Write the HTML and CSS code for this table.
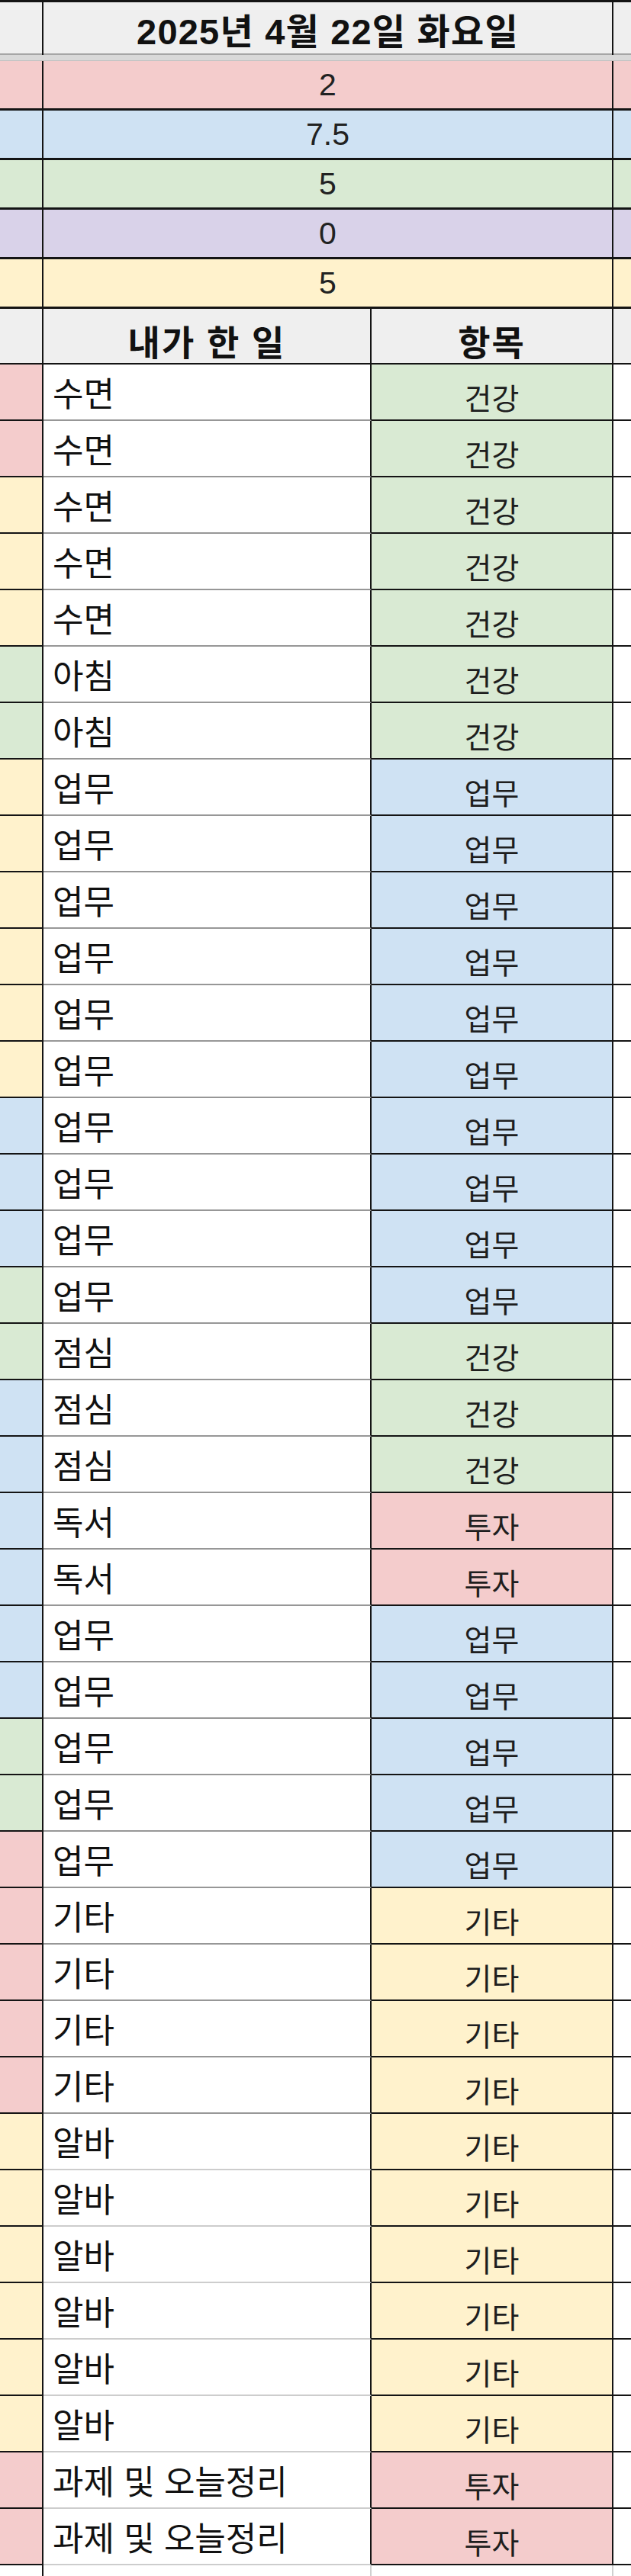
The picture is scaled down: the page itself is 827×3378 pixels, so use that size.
FILE: index.html
```html
<!DOCTYPE html>
<html lang="ko">
<head>
<meta charset="utf-8">
<title>2025년 4월 22일 화요일</title>
<link rel="stylesheet" href="styles.css">
</head>
<body>
<div class="sheet">
  <div class="row wide title-row">
    <div class="cell"></div>
    <div class="cell title">2025년 4월 22일 화요일</div>
    <div class="cell"></div>
  </div>
  <div class="divider"></div>
  <div class="row wide sum pink"><div class="cell"></div><div class="cell num">2</div><div class="cell"></div></div>
  <div class="row wide sum blue"><div class="cell"></div><div class="cell num">7.5</div><div class="cell"></div></div>
  <div class="row wide sum green"><div class="cell"></div><div class="cell num">5</div><div class="cell"></div></div>
  <div class="row wide sum purple"><div class="cell"></div><div class="cell num">0</div><div class="cell"></div></div>
  <div class="row wide sum yellow"><div class="cell"></div><div class="cell num">5</div><div class="cell"></div></div>
  <div class="row head">
    <div class="cell"></div>
    <div class="cell hcell">내가 한 일</div>
    <div class="cell hcell">항목</div>
    <div class="cell"></div>
  </div>

  <div class="row data"><div class="cell side pink"></div><div class="cell task">수면</div><div class="cell cat green">건강</div><div class="cell edge"></div></div>
  <div class="row data"><div class="cell side pink"></div><div class="cell task">수면</div><div class="cell cat green">건강</div><div class="cell edge"></div></div>
  <div class="row data"><div class="cell side yellow"></div><div class="cell task">수면</div><div class="cell cat green">건강</div><div class="cell edge"></div></div>
  <div class="row data"><div class="cell side yellow"></div><div class="cell task">수면</div><div class="cell cat green">건강</div><div class="cell edge"></div></div>
  <div class="row data"><div class="cell side yellow"></div><div class="cell task">수면</div><div class="cell cat green">건강</div><div class="cell edge"></div></div>
  <div class="row data"><div class="cell side green"></div><div class="cell task">아침</div><div class="cell cat green">건강</div><div class="cell edge"></div></div>
  <div class="row data"><div class="cell side green"></div><div class="cell task">아침</div><div class="cell cat green">건강</div><div class="cell edge"></div></div>
  <div class="row data"><div class="cell side yellow"></div><div class="cell task">업무</div><div class="cell cat blue">업무</div><div class="cell edge"></div></div>
  <div class="row data"><div class="cell side yellow"></div><div class="cell task">업무</div><div class="cell cat blue">업무</div><div class="cell edge"></div></div>
  <div class="row data"><div class="cell side yellow"></div><div class="cell task">업무</div><div class="cell cat blue">업무</div><div class="cell edge"></div></div>
  <div class="row data"><div class="cell side yellow"></div><div class="cell task">업무</div><div class="cell cat blue">업무</div><div class="cell edge"></div></div>
  <div class="row data"><div class="cell side yellow"></div><div class="cell task">업무</div><div class="cell cat blue">업무</div><div class="cell edge"></div></div>
  <div class="row data"><div class="cell side yellow"></div><div class="cell task">업무</div><div class="cell cat blue">업무</div><div class="cell edge"></div></div>
  <div class="row data"><div class="cell side blue"></div><div class="cell task">업무</div><div class="cell cat blue">업무</div><div class="cell edge"></div></div>
  <div class="row data"><div class="cell side blue"></div><div class="cell task">업무</div><div class="cell cat blue">업무</div><div class="cell edge"></div></div>
  <div class="row data"><div class="cell side blue"></div><div class="cell task">업무</div><div class="cell cat blue">업무</div><div class="cell edge"></div></div>
  <div class="row data"><div class="cell side green"></div><div class="cell task">업무</div><div class="cell cat blue">업무</div><div class="cell edge"></div></div>
  <div class="row data"><div class="cell side green"></div><div class="cell task">점심</div><div class="cell cat green">건강</div><div class="cell edge"></div></div>
  <div class="row data"><div class="cell side blue"></div><div class="cell task">점심</div><div class="cell cat green">건강</div><div class="cell edge"></div></div>
  <div class="row data"><div class="cell side blue"></div><div class="cell task">점심</div><div class="cell cat green">건강</div><div class="cell edge"></div></div>
  <div class="row data"><div class="cell side blue"></div><div class="cell task">독서</div><div class="cell cat pink">투자</div><div class="cell edge"></div></div>
  <div class="row data"><div class="cell side blue"></div><div class="cell task">독서</div><div class="cell cat pink">투자</div><div class="cell edge"></div></div>
  <div class="row data"><div class="cell side blue"></div><div class="cell task">업무</div><div class="cell cat blue">업무</div><div class="cell edge"></div></div>
  <div class="row data"><div class="cell side blue"></div><div class="cell task">업무</div><div class="cell cat blue">업무</div><div class="cell edge"></div></div>
  <div class="row data"><div class="cell side green"></div><div class="cell task">업무</div><div class="cell cat blue">업무</div><div class="cell edge"></div></div>
  <div class="row data"><div class="cell side green"></div><div class="cell task">업무</div><div class="cell cat blue">업무</div><div class="cell edge"></div></div>
  <div class="row data"><div class="cell side pink"></div><div class="cell task">업무</div><div class="cell cat blue">업무</div><div class="cell edge"></div></div>
  <div class="row data"><div class="cell side pink"></div><div class="cell task">기타</div><div class="cell cat yellow">기타</div><div class="cell edge"></div></div>
  <div class="row data"><div class="cell side pink"></div><div class="cell task">기타</div><div class="cell cat yellow">기타</div><div class="cell edge"></div></div>
  <div class="row data"><div class="cell side pink"></div><div class="cell task">기타</div><div class="cell cat yellow">기타</div><div class="cell edge"></div></div>
  <div class="row data"><div class="cell side pink"></div><div class="cell task">기타</div><div class="cell cat yellow">기타</div><div class="cell edge"></div></div>
  <div class="row data light"><div class="cell side yellow"></div><div class="cell task">알바</div><div class="cell cat yellow">기타</div><div class="cell edge"></div></div>
  <div class="row data light"><div class="cell side yellow"></div><div class="cell task">알바</div><div class="cell cat yellow">기타</div><div class="cell edge"></div></div>
  <div class="row data light"><div class="cell side yellow"></div><div class="cell task">알바</div><div class="cell cat yellow">기타</div><div class="cell edge"></div></div>
  <div class="row data light"><div class="cell side yellow"></div><div class="cell task">알바</div><div class="cell cat yellow">기타</div><div class="cell edge"></div></div>
  <div class="row data light"><div class="cell side yellow"></div><div class="cell task">알바</div><div class="cell cat yellow">기타</div><div class="cell edge"></div></div>
  <div class="row data light"><div class="cell side yellow"></div><div class="cell task">알바</div><div class="cell cat yellow">기타</div><div class="cell edge"></div></div>
  <div class="row data light"><div class="cell side pink"></div><div class="cell task">과제 및 오늘정리</div><div class="cell cat pink">투자</div><div class="cell edge"></div></div>
  <div class="row data light"><div class="cell side pink"></div><div class="cell task">과제 및 오늘정리</div><div class="cell cat pink">투자</div><div class="cell edge"></div></div>

  <div class="row tail"><div class="cell"></div><div class="cell"></div><div class="cell"></div><div class="cell"></div></div>
</div>
</body>
</html>
```

FILE: styles.css
```css
* {
  box-sizing: border-box;
  margin: 0;
  padding: 0;
}

html, body {
  margin: 0;
  background: #ffffff;
}

body {
  width: 827px;
  font-family: "Liberation Sans", "Noto Sans CJK KR", sans-serif;
  color: #151515;
  overflow: hidden;
}

.sheet {
  width: 827px;
  border-top: 3px solid #141414;
}

.row {
  display: grid;
  grid-template-columns: 57px 430px 317px 23px;
}

.row.wide {
  grid-template-columns: 57px 747px 23px;
}

.cell {
  border-right: 2px solid #141414;
  display: flex;
  align-items: center;
}

.cell:last-child {
  border-right: none;
}

.pink { background: #f4cccc; }
.blue { background: #cfe2f3; }
.green { background: #d9ead3; }
.purple { background: #d9d2e9; }
.yellow { background: #fff2cc; }

.title-row {
  height: 67px;
  background: #efefef;
}

.title {
  justify-content: center;
  font-weight: bold;
  font-size: 47px;
  letter-spacing: 1.2px;
  color: #111;
}

.divider {
  height: 10px;
  background: #d9d9d9;
  border-top: 2px solid #a6a6a6;
  border-bottom: 1px solid #c2c2c2;
}

.sum {
  height: 65px;
  border-bottom: 3px solid #141414;
}

.num {
  justify-content: center;
  font-size: 41px;
  color: #222;
}

.head {
  height: 73px;
  background: #efefef;
  border-bottom: 2px solid #141414;
}

.hcell {
  justify-content: center;
  font-weight: bold;
  font-size: 46px;
  letter-spacing: 2px;
  padding-top: 8px;
  color: #111;
}

.data {
  height: 74px;
}

.data .cell {
  border-bottom: 2px solid #141414;
}

.data .task {
  background: #ffffff;
  border-bottom-color: #979797;
  font-size: 44px;
  padding-left: 12px;
  color: #111;
}

.data.light .task {
  border-bottom-color: #cdcdcd;
}

.data .cat {
  justify-content: center;
  font-size: 39px;
  padding-top: 12px;
  color: #1e1e1e;
}

.data .edge {
  background: #ffffff;
}

.tail {
  height: 20px;
}

.tail .cell {
  border-right-color: #d0d0d0;
}

.tail .cell:first-child {
  border-right-color: #141414;
}
```
